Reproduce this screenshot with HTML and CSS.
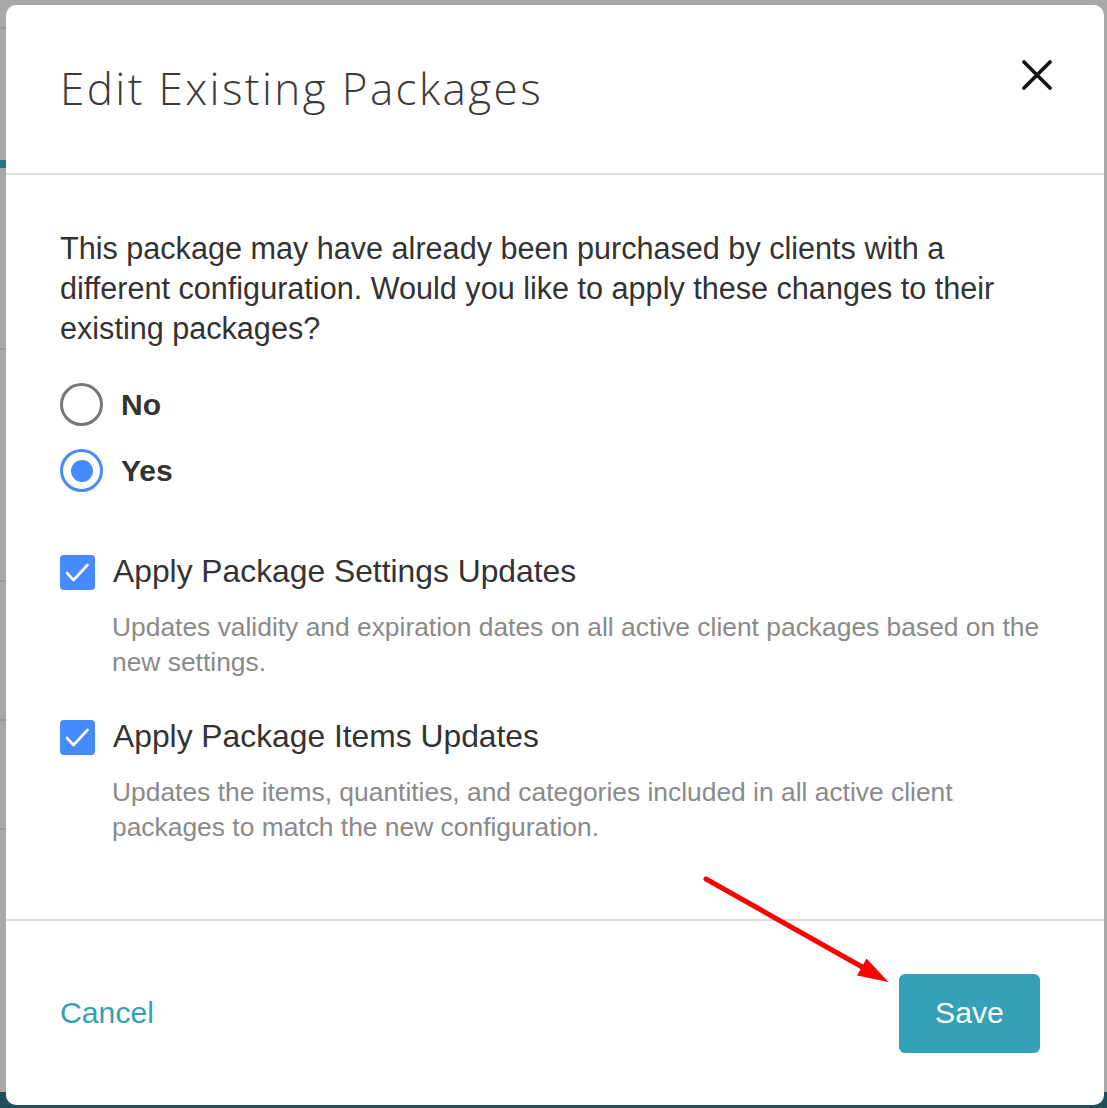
FILE: index.html
```html
<!DOCTYPE html>
<html lang="en">
<head>
<meta charset="utf-8">
<title>Edit Existing Packages</title>
<link rel="stylesheet" href="styles.css">
</head>
<body>
<div class="backdrop">
  <div class="bg-line bg-teal-bar"></div>
  <div class="bg-line bg-rule bg-rule-1"></div>
  <div class="bg-line bg-rule bg-rule-2"></div>
  <div class="bg-line bg-rule bg-rule-3"></div>
  <div class="bg-line bg-rule bg-rule-4"></div>
  <div class="bg-line bg-rule bg-rule-5"></div>
  <div class="bg-bottom"></div>
</div>

<div class="modal" role="dialog" aria-labelledby="modal-title">
  <header class="modal-header">
    <h1 class="modal-title" id="modal-title">Edit Existing Packages</h1>
    <button class="close-btn" type="button" aria-label="Close">
      <svg width="30" height="30" viewBox="0 0 30 30" aria-hidden="true">
        <path d="M2 2 L28 28 M28 2 L2 28" stroke="#111" stroke-width="3.6" stroke-linecap="round" fill="none"/>
      </svg>
    </button>
  </header>

  <div class="modal-body">
    <p class="intro">This package may have already been purchased by clients with a different configuration. Would you like to apply these changes to their existing packages?</p>

    <div class="radio-group">
      <label class="radio-row">
        <span class="radio"></span>
        <span class="radio-label">No</span>
      </label>
      <label class="radio-row">
        <span class="radio radio-checked"><span class="radio-dot"></span></span>
        <span class="radio-label">Yes</span>
      </label>
    </div>

    <div class="option option-first">
      <div class="option-head">
        <span class="checkbox">
          <svg width="35" height="35" viewBox="0 0 35 35" aria-hidden="true">
            <path d="M7 18 L13.5 25 L27.5 10" stroke="#fff" stroke-width="2.6" fill="none" stroke-linecap="round" stroke-linejoin="round"/>
          </svg>
        </span>
        <span class="option-label">Apply Package Settings Updates</span>
      </div>
      <p class="option-desc">Updates validity and expiration dates on all active client packages based on the new settings.</p>
    </div>

    <div class="option option-second">
      <div class="option-head">
        <span class="checkbox">
          <svg width="35" height="35" viewBox="0 0 35 35" aria-hidden="true">
            <path d="M7 18 L13.5 25 L27.5 10" stroke="#fff" stroke-width="2.6" fill="none" stroke-linecap="round" stroke-linejoin="round"/>
          </svg>
        </span>
        <span class="option-label">Apply Package Items Updates</span>
      </div>
      <p class="option-desc">Updates the items, quantities, and categories included in all active client packages to match the new configuration.</p>
    </div>
  </div>

  <footer class="modal-footer">
    <a class="cancel-link" href="#">Cancel</a>
    <button class="save-btn" type="button">Save</button>
  </footer>
</div>

<svg class="annotation" width="1107" height="1108" viewBox="0 0 1107 1108" aria-hidden="true">
  <line x1="706" y1="879" x2="864" y2="968" stroke="#ff0000" stroke-width="5" stroke-linecap="round"/>
  <polygon points="888.5,982 857,975.5 866.5,958.5" fill="#ff0000"/>
</svg>
</body>
</html>
```

FILE: styles.css
```css
* {
  box-sizing: border-box;
}

html, body {
  margin: 0;
  padding: 0;
}

body {
  width: 1107px;
  height: 1108px;
  overflow: hidden;
  background: #a8a8a8;
  font-family: "Liberation Sans", Arial, sans-serif;
  position: relative;
}

/* ---------- backdrop (page under the overlay) ---------- */
.backdrop {
  position: absolute;
  inset: 0;
  background: #a8a8a8;
}

.bg-line {
  position: absolute;
  left: 0;
  width: 6px;
}

.bg-teal-bar {
  top: 160px;
  height: 8px;
  background: #2a7280;
}

.bg-rule {
  height: 2px;
  background: #999;
}

.bg-rule-1 { top: 27px; }
.bg-rule-2 { top: 348px; }
.bg-rule-3 { top: 580px; }
.bg-rule-4 { top: 719px; }
.bg-rule-5 { top: 828px; }

.bg-bottom {
  position: absolute;
  left: 0;
  right: 0;
  top: 1092px;
  bottom: 0;
  background: #1f4f5b;
}

/* ---------- modal ---------- */
.modal {
  position: absolute;
  left: 6px;
  top: 5px;
  width: 1098px;
  height: 1100px;
  background: #fff;
  border-radius: 10px;
  display: flex;
  flex-direction: column;
  overflow: hidden;
  z-index: 1;
}

.modal-header {
  height: 170px;
  flex: none;
  display: flex;
  align-items: flex-start;
  justify-content: space-between;
  padding: 0 52px 0 54px;
  border-bottom: 2px solid #dedede;
}

.modal-title {
  margin: 53px 0 0;
  font-family: "Open Sans", "Lato", sans-serif;
  font-weight: 300;
  font-size: 44px;
  line-height: 60px;
  color: #3a3a3a;
  letter-spacing: 2.4px;
}

.close-btn {
  margin-top: 55px;
  width: 30px;
  height: 30px;
  padding: 0;
  border: 0;
  background: none;
  display: block;
}

.close-btn svg {
  display: block;
}

/* ---------- body ---------- */
.modal-body {
  flex: 1;
  padding: 53px 54px 0;
  color: #333;
}

.intro {
  margin: 0;
  font-size: 30.6px;
  line-height: 40px;
  color: #333;
}

.radio-group {
  margin-top: 35px;
  display: flex;
  flex-direction: column;
  gap: 23px;
}

.radio-row {
  display: flex;
  align-items: center;
  gap: 18px;
}

.radio {
  width: 43px;
  height: 43px;
  border-radius: 50%;
  border: 3px solid #777;
  flex: none;
  display: flex;
  align-items: center;
  justify-content: center;
}

.radio-checked {
  border: 3.5px solid #468bfd;
}

.radio-dot {
  width: 22px;
  height: 22px;
  border-radius: 50%;
  background: #468bfd;
}

.radio-label {
  font-weight: 700;
  font-size: 30px;
  line-height: 40px;
  color: #333;
}

.option-first {
  margin-top: 63px;
}

.option-second {
  margin-top: 40px;
}

.option-head {
  display: flex;
  align-items: center;
  gap: 18px;
}

.checkbox {
  width: 35px;
  height: 35px;
  border-radius: 4px;
  background: #468bfd;
  flex: none;
  display: block;
}

.checkbox svg {
  display: block;
}

.option-label {
  font-size: 31.8px;
  line-height: 35px;
  color: #333;
  margin-top: -3px;
}

.option-desc {
  margin: 20px 0 0 52px;
  font-size: 26.4px;
  line-height: 35px;
  color: #8a8a8a;
}

/* ---------- footer ---------- */
.modal-footer {
  height: 186px;
  flex: none;
  border-top: 2px solid #dedede;
  display: flex;
  align-items: center;
  justify-content: space-between;
  padding: 0 64px 0 54px;
}

.cancel-link {
  font-size: 30.2px;
  color: #34a1b7;
  text-decoration: none;
}

.save-btn {
  width: 141px;
  height: 79px;
  border: 0;
  border-radius: 6px;
  background: #34a1b7;
  color: #fff;
  font-family: "Liberation Sans", Arial, sans-serif;
  font-size: 30.2px;
  padding: 0;
}

/* ---------- annotation ---------- */
.annotation {
  position: absolute;
  left: 0;
  top: 0;
  z-index: 2;
  pointer-events: none;
}
```
